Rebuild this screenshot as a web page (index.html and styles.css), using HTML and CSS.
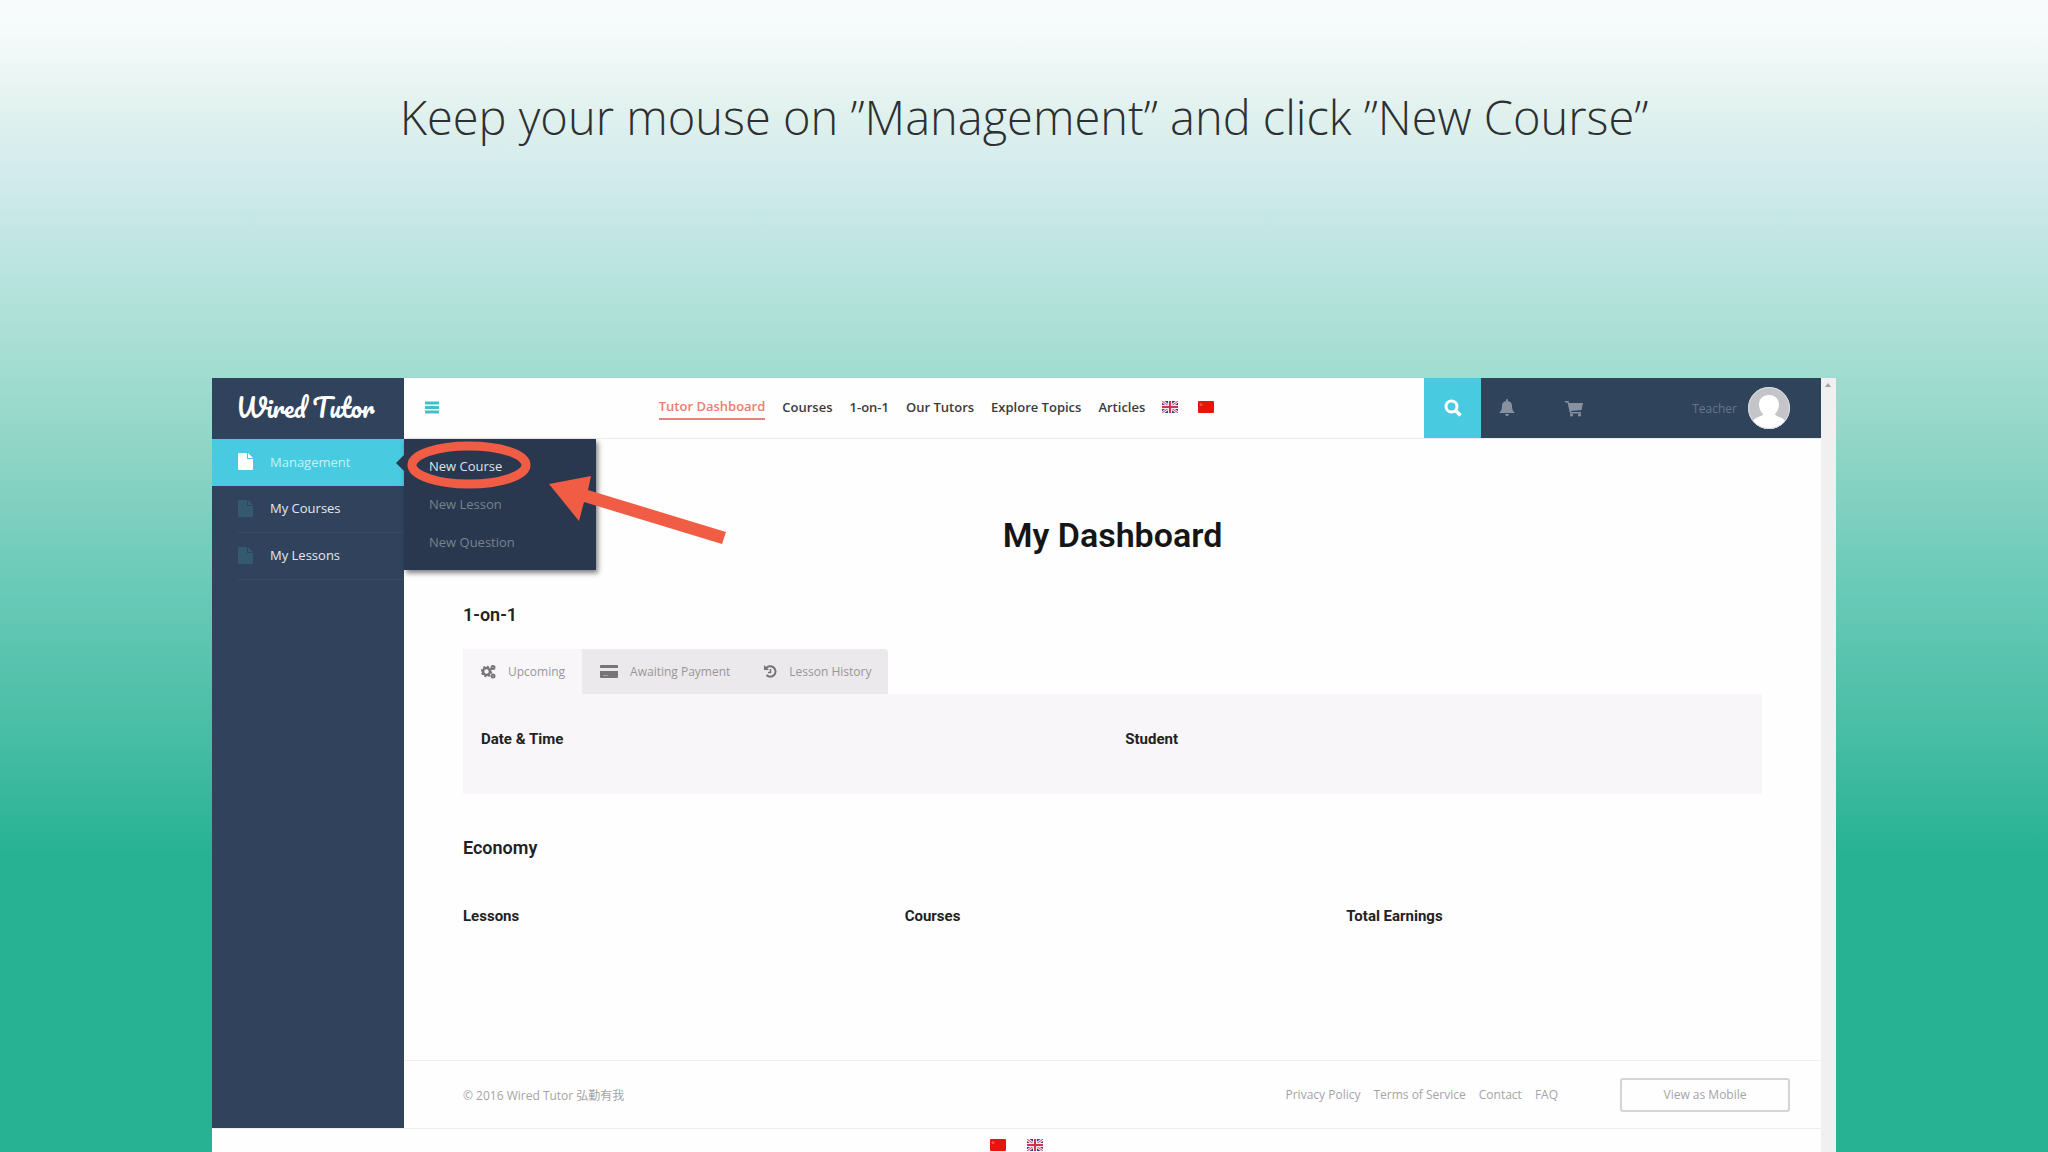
FILE: index.html
```
<!DOCTYPE html>
<html lang="en">
<head>
    <meta charset="UTF-8">
    <meta name="viewport" content="width=device-width, initial-scale=1.0">
    <title>Wired Tutor - New Course</title>
    <link rel="stylesheet" href="styles.css">
</head>
<body>
    <!-- Shared icons -->
    <svg class="sprite" aria-hidden="true">
        <symbol id="flag-uk" viewBox="0 0 16 12">
            <rect width="16" height="12" rx="1" fill="#3c3f86"/>
            <path d="M0 0l16 12M16 0L0 12" stroke="#f3e6ee" stroke-width="3"/>
            <path d="M0 0l16 12M16 0L0 12" stroke="#d2506a" stroke-width="1"/>
            <path d="M8 0v12M0 6h16" stroke="#f3e6ee" stroke-width="4"/>
            <path d="M8 0v12M0 6h16" stroke="#cf3450" stroke-width="2"/>
        </symbol>
        <symbol id="flag-cn" viewBox="0 0 16 12">
            <rect width="16" height="12" rx="1" fill="#e8130c"/>
            <path d="M3 1.500l.6 1.300 1.400.2-1 1 .2 1.400L3 4.700l-1.200.7.2-1.400-1-1 1.400-.2z" fill="#f0582a"/>
        </symbol>
        <symbol id="file" viewBox="0 0 15 17">
            <path d="M1 0h8v6h6v10a1 1 0 0 1-1 1H1a1 1 0 0 1-1-1V1a1 1 0 0 1 1-1z"/>
            <path d="M10 0l5 5h-5z"/>
        </symbol>
    </svg>

    <h1 class="title">Keep your mouse on ”Management” and click ”New Course”</h1>

    <div class="window">
        <div class="app">
            <aside class="sidebar">
                <a href="#" class="logo">Wired Tutor</a>
                <ul class="menu">
                    <li class="menu-item active">
                        <a href="#"><svg class="file-icon"><use href="#file"/></svg>Management</a>
                        <ul class="submenu">
                            <li><a href="#" class="current">New Course</a></li>
                            <li><a href="#">New Lesson</a></li>
                            <li><a href="#">New Question</a></li>
                        </ul>
                        <svg class="marker" viewBox="0 0 330 110" aria-hidden="true">
                            <ellipse cx="65" cy="26" rx="57" ry="19" fill="none" stroke="#f15c45" stroke-width="9"/>
                            <path d="M145 45l42-8-3 14 138 42-4 12-138-42-5 19z" fill="#f15c45"/>
                        </svg>
                    </li>
                    <li class="menu-item"><a href="#"><svg class="file-icon"><use href="#file"/></svg>My Courses</a></li>
                    <li class="menu-item"><a href="#"><svg class="file-icon"><use href="#file"/></svg>My Lessons</a></li>
                </ul>
            </aside>

            <div class="main">
                <header class="header">
                    <button class="toggle" aria-label="Menu">
                        <svg width="14" height="13" viewBox="0 0 14 13"><path d="M0 2h14M0 6.500h14M0 11h14" stroke="#45bfcb" stroke-width="3"/></svg>
                    </button>
                    <nav class="nav">
                        <a href="#" class="current">Tutor Dashboard</a>
                        <a href="#">Courses</a>
                        <a href="#">1-on-1</a>
                        <a href="#">Our Tutors</a>
                        <a href="#">Explore Topics</a>
                        <a href="#">Articles</a>
                        <a href="#" class="flag" aria-label="English"><svg><use href="#flag-uk"/></svg></a>
                        <a href="#" class="flag" aria-label="Chinese"><svg><use href="#flag-cn"/></svg></a>
                    </nav>
                    <button class="search" aria-label="Search">
                        <svg width="18" height="18" viewBox="0 0 18 18"><circle cx="7.500" cy="7.500" r="5.500" fill="none" stroke="#fff" stroke-width="3"/><path d="M11.500 11.500l5 5" stroke="#fff" stroke-width="3.500"/></svg>
                    </button>
                    <div class="user-bar">
                        <button aria-label="Notifications">
                            <svg width="18" height="18" viewBox="0 0 18 18"><path d="M8 1a1 1 0 0 1 2 0v1c3 .5 4 2.500 4 5 0 3.500 1 5.500 3 7H1c2-1.500 3-3.500 3-7 0-2.500 1-4.500 4-5zM7 15h4a2 2 0 0 1-4 0z" fill="#8791a0"/></svg>
                        </button>
                        <button aria-label="Cart">
                            <svg width="18" height="17" viewBox="0 0 18 17"><path d="M0 1h3.500l.5 2h14l-1.500 7-10.500 1 .3 1H16v1.500H5L2.500 2.500H0z" fill="#8791a0"/><circle cx="6.500" cy="15" r="1.600" fill="#8791a0"/><circle cx="14.500" cy="15" r="1.600" fill="#8791a0"/></svg>
                        </button>
                        <a href="#" class="profile">Teacher
                            <svg width="42" height="42" viewBox="0 0 42 42"><circle cx="21" cy="21" r="21" fill="#c3c5c9"/><path d="M21 8c6 0 10 4 10 9.500 0 4-1.500 7-4 9.500 0 3 9 2.500 10 7.500a21 21 0 0 1-32 0c1-5 10-4.500 10-7.500-2.500-2.500-4-5.500-4-9.500C11 12 15 8 21 8z" fill="#fff"/><circle cx="21" cy="21" r="20.500" fill="none" stroke="#d9dbde"/></svg>
                        </a>
                    </div>
                </header>

                <main class="content">
                    <h2 class="page-title">My Dashboard</h2>

                    <section>
                        <h3>1-on-1</h3>
                        <div class="tabs">
                            <button class="tab selected">
                                <svg width="15" height="15" viewBox="0 0 15 15" fill="none" stroke="#77757a"><circle cx="5.500" cy="7.500" r="3.500" stroke-width="2.500"/><circle cx="5.500" cy="7.500" r="5" stroke-width="1.500" stroke-dasharray="2 1.900"/><circle cx="12" cy="3.500" r="1.500" stroke-width="2"/><circle cx="12" cy="12" r="1.500" stroke-width="2"/></svg>
                                Upcoming
                            </button>
                            <button class="tab">
                                <svg width="18" height="13" viewBox="0 0 18 13"><path d="M1 0h16a1 1 0 0 1 1 1v2H0V1a1 1 0 0 1 1-1zM0 6h18v6a1 1 0 0 1-1 1H1a1 1 0 0 1-1-1z" fill="#77757a"/><path d="M3 10.500h5" stroke="#a5a3a8"/></svg>
                                Awaiting Payment
                            </button>
                            <button class="tab">
                                <svg width="13" height="13" viewBox="0 0 13 13" fill="none" stroke="#77757a"><path d="M2 3.500A5.200 5.200 0 1 1 2.500 10" stroke-width="2"/><path d="M6.500 4v3.500H4" stroke-width="1.500"/><path d="M0 0v5h5z" fill="#77757a" stroke="none"/></svg>
                                Lesson History
                            </button>
                        </div>
                        <table class="lessons">
                            <thead>
                                <tr><th>Date &amp; Time</th><th>Student</th></tr>
                            </thead>
                        </table>
                    </section>

                    <section>
                        <h3>Economy</h3>
                        <table class="economy">
                            <thead>
                                <tr><th>Lessons</th><th>Courses</th><th>Total Earnings</th></tr>
                            </thead>
                        </table>
                    </section>
                </main>

                <footer class="footer">
                    <span>© 2016 Wired Tutor 弘勤有我</span>
                    <div class="footer-links">
                        <a href="#">Privacy Policy</a>
                        <a href="#">Terms of Service</a>
                        <a href="#">Contact</a>
                        <a href="#">FAQ</a>
                    </div>
                    <button class="mobile-button">View as Mobile</button>
                </footer>
            </div>

            <div class="languages">
                <a href="#" class="flag" aria-label="Chinese"><svg><use href="#flag-cn"/></svg></a>
                <a href="#" class="flag" aria-label="English"><svg><use href="#flag-uk"/></svg></a>
            </div>
        </div>
        <div class="scrollbar"><svg width="6" height="4" viewBox="0 0 6 4"><path d="M0 4l3-4 3 4z" fill="#a3a3a6"/></svg></div>
    </div>
</body>
</html>
```
FILE: styles.css
```
* {
    box-sizing: border-box;
}

body {
    margin: 0;
    height: 100vh;
    overflow: hidden;
    display: flex;
    flex-direction: column;
    font-family: "Open Sans", sans-serif;
    font-size: 13px;
    color: #222;
    background: linear-gradient(#f8fbfc 0%, #f4fbfa 3%, #e0f1ed 10%, #d6ecee 14%, #bde5e1 22%, #a2ddd1 32%, #86d2c2 42%, #69cab8 51%, #47bda4 64%, #28b294 74%);
}

h1, h2, h3, ul {
    margin: 0;
    padding: 0;
}

ul {
    list-style-type: none;
}

a {
    color: inherit;
    text-decoration: none;
}

button {
    padding: 0;
    border: none;
    background: none;
    font: inherit;
    color: inherit;
    cursor: pointer;
}

svg {
    display: block;
    flex: none;
}

.sprite {
    position: absolute;
    width: 0;
    height: 0;
}

.title {
    height: 378px;
    flex: none;
    padding-top: 87px;
    text-align: center;
    font-size: 47px;
    font-weight: 300;
    line-height: 60px;
    color: #2c3032;
}

.window {
    flex: 1;
    display: flex;
    width: 80%;
    max-width: 1624px;
    margin: 0 auto;
    background-color: #fefefe;
}

.app {
    flex: 1;
    display: grid;
    grid-template-columns: 192px 1fr;
    grid-template-rows: 750px 1fr;
}

.scrollbar {
    width: 15px;
    padding: 5px 4px;
    background-color: #f0f0f1;
}

/* Sidebar */
.sidebar {
    background-color: #31435c;
    color: #e4e8ee;
}

.logo {
    display: block;
    height: 61px;
    padding-left: 24px;
    font-family: "Brush Script MT", Pacifico, cursive;
    font-size: 25px;
    line-height: 58px;
    color: #fff;
    white-space: nowrap;
}

.menu-item {
    position: relative;
}

.menu-item > a {
    display: flex;
    align-items: center;
    height: 47px;
    margin-left: 26px;
    gap: 17px;
    padding-bottom: 2px;
    border-bottom: 1px solid #394c66;
}

.file-icon {
    width: 15px;
    height: 17px;
    fill: #355a70;
}

.menu-item.active > a {
    margin-left: 0;
    padding-left: 26px;
    border-bottom: none;
    background-color: #48cae0;
    color: #c5f2f8;
}

.active .file-icon {
    fill: #fff;
}

.submenu {
    position: absolute;
    top: 0;
    left: 100%;
    z-index: 1;
    width: 192px;
    padding: 8px 0 9px;
    background-color: #29384e;
    box-shadow: 2px 3px 5px rgba(0, 0, 0, 0.5);
    color: #77828f;
}

.submenu::before {
    content: "";
    position: absolute;
    top: 16px;
    right: 100%;
    border: 8px solid transparent;
    border-left: none;
    border-right-color: #29384e;
}

.submenu a {
    display: block;
    padding-left: 25px;
    line-height: 38px;
}

.submenu .current {
    color: #dfe3e8;
}

.marker {
    position: absolute;
    top: 0;
    left: 100%;
    z-index: 2;
    width: 330px;
    height: 110px;
    pointer-events: none;
}

/* Header */
.main {
    display: flex;
    flex-direction: column;
}

.header {
    display: flex;
    height: 61px;
    border-bottom: 1px solid #ececef;
}

.toggle {
    padding: 0 21px 2px;
}

.nav {
    flex: 1;
    display: flex;
    justify-content: center;
    align-items: center;
    gap: 17px;
    padding: 0 11px 2px 0;
    font-weight: 600;
    line-height: 24px;
    color: #3a3a3c;
    white-space: nowrap;
}

.nav .current {
    border-bottom: 2px solid #e58478;
    color: #ec7d70;
}

.flag svg {
    width: 16px;
    height: 12px;
}

.nav .flag + .flag {
    margin-left: 3px;
}

.search {
    width: 57px;
    display: flex;
    justify-content: center;
    align-items: center;
    background-color: #48cae0;
}

.user-bar {
    display: flex;
    align-items: center;
    width: 340px;
    padding: 0 31px 0 17px;
    gap: 49px;
    background-color: #2f435b;
}

.profile {
    display: flex;
    align-items: center;
    gap: 11px;
    margin-left: auto;
    font-size: 12px;
    color: #66758a;
}

/* Dashboard */
.content {
    flex: 1;
    padding: 0 59px;
}

.page-title {
    padding: 76px 0 48px;
    text-align: center;
    font-family: Roboto, sans-serif;
    font-size: 34px;
    font-weight: 600;
    line-height: 40px;
    color: #151515;
}

h3 {
    font-family: Roboto, sans-serif;
    font-size: 18px;
    font-weight: 600;
    line-height: 24px;
}

.tabs {
    display: flex;
    height: 45px;
    margin-top: 22px;
}

.tab {
    display: flex;
    align-items: center;
    gap: 12px;
    padding: 0 16px 0 18px;
    background-color: #ebe9ec;
    font-size: 12px;
    color: #98969b;
}

.tab.selected {
    padding-right: 17px;
    background-color: #f8f6f9;
}

.tab:last-child {
    border-radius: 0 4px 0 0;
}

table {
    width: 100%;
    table-layout: fixed;
    border-collapse: collapse;
    font-family: Roboto, sans-serif;
    font-size: 15px;
}

th {
    padding: 0;
    text-align: left;
    font-weight: 700;
    line-height: 20px;
}

.lessons {
    margin-bottom: 42px;
    background-color: #f8f6f9;
}

.lessons th {
    padding: 35px 18px 45px;
}

.lessons th:first-child {
    width: 49.6%;
}

.economy {
    margin-top: 46px;
}

.economy th {
    width: 34%;
}

.economy th:last-child {
    width: 32%;
}

/* Footer */
.footer {
    display: flex;
    align-items: center;
    height: 68px;
    padding: 0 31px 0 59px;
    border-top: 1px solid #f0eef2;
    font-family: "Open Sans", "Noto Sans CJK TC", sans-serif;
    font-size: 12px;
    color: #a5a3a8;
}

.footer-links {
    display: flex;
    gap: 13px;
    margin-left: auto;
}

.mobile-button {
    width: 170px;
    height: 34px;
    margin-left: 62px;
    border: 2px solid #d5d2d9;
    border-radius: 3px;
}

.languages {
    grid-column: 1 / 3;
    display: flex;
    justify-content: center;
    gap: 21px;
    padding: 10px 0;
    border-top: 1px solid #eeecf0;
}
```
